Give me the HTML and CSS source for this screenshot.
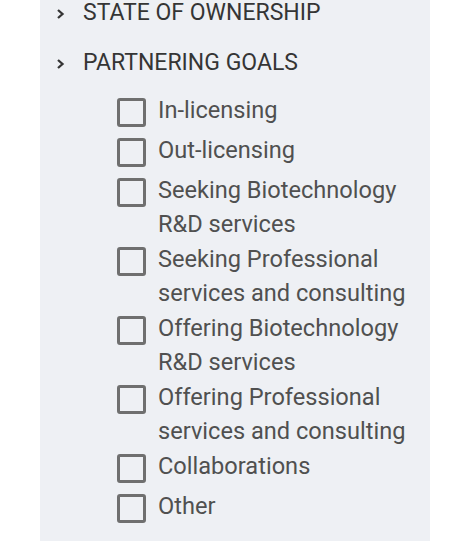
FILE: index.html
```html
<!DOCTYPE html>
<html>
<head>
<meta charset="utf-8">
<link rel="stylesheet" href="styles.css">
</head>
<body>
<div class="panel">
  <div class="section-head">
    <svg class="chev" width="9" height="12" viewBox="0 0 9 12"><polyline points="2,2 6.5,6 2,10" fill="none" stroke="#353535" stroke-width="2.3"/></svg>
    <span class="head-text">STATE OF OWNERSHIP</span>
  </div>
  <div class="section-head">
    <svg class="chev" width="9" height="12" viewBox="0 0 9 12"><polyline points="2,2 6.5,6 2,10" fill="none" stroke="#353535" stroke-width="2.3"/></svg>
    <span class="head-text">PARTNERING GOALS</span>
  </div>
  <ul class="options">
    <li class="option"><span class="box"></span><span class="label">In-licensing</span></li>
    <li class="option"><span class="box"></span><span class="label">Out-licensing</span></li>
    <li class="option"><span class="box"></span><span class="label">Seeking Biotechnology R&amp;D services</span></li>
    <li class="option"><span class="box"></span><span class="label">Seeking Professional services and consulting</span></li>
    <li class="option"><span class="box"></span><span class="label">Offering Biotechnology R&amp;D services</span></li>
    <li class="option"><span class="box"></span><span class="label">Offering Professional services and consulting</span></li>
    <li class="option"><span class="box"></span><span class="label">Collaborations</span></li>
    <li class="option"><span class="box"></span><span class="label">Other</span></li>
  </ul>
</div>
</body>
</html>
```

FILE: styles.css
```css
html, body {
  margin: 0;
  padding: 0;
  background: #ffffff;
}
body {
  font-family: Roboto, "Liberation Sans", sans-serif;
}
.panel {
  margin-left: 40px;
  width: 390px;
  min-height: 541px;
  background: #eef0f4;
  box-sizing: border-box;
  padding-right: 15px;
}
.section-head {
  display: flex;
  align-items: center;
  padding-left: 16px;
  height: 26px;
  margin-bottom: 24px;
}
.section-head + .section-head {
  margin-bottom: 16.5px;
}
.chev {
  flex: none;
  margin-right: 18px;
  margin-top: 1px;
}
.head-text {
  font-size: 23px;
  line-height: 26px;
  color: #353535;
}
.options {
  list-style: none;
  margin: 0;
  padding: 0 0 0 77px;
}
.option {
  display: flex;
  align-items: flex-start;
}
.box {
  flex: none;
  width: 29px;
  height: 29px;
  box-sizing: border-box;
  border: 3px solid #6f6f6f;
  border-radius: 3px;
  margin: 5px 12px 6px 0;
}
.label {
  font-size: 23.6px;
  line-height: 34.5px;
  color: #505050;
}
```
